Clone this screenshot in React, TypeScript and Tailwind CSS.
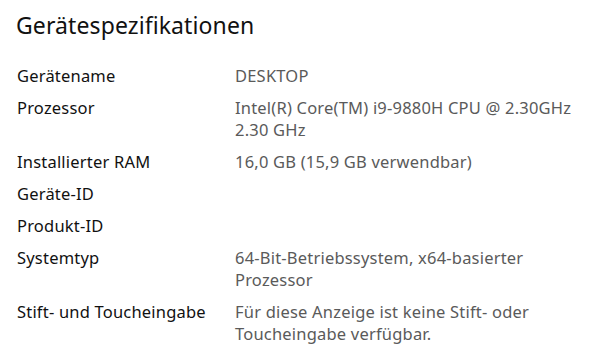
import React from "react";

const rows: { label: string; value: string[] }[] = [
  { label: "Gerätename", value: ["DESKTOP"] },
  { label: "Prozessor", value: ["Intel(R) Core(TM) i9-9880H CPU @ 2.30GHz", "2.30 GHz"] },
  { label: "Installierter RAM", value: ["16,0 GB (15,9 GB verwendbar)"] },
  { label: "Geräte-ID", value: [] },
  { label: "Produkt-ID", value: [] },
  { label: "Systemtyp", value: ["64-Bit-Betriebssystem, x64-basierter", "Prozessor"] },
  { label: "Stift- und Toucheingabe", value: ["Für diese Anzeige ist keine Stift- oder", "Toucheingabe verfügbar."] },
];

export default function App() {
  return (
    <div
      className="w-[600px] h-[358px] bg-white overflow-hidden"
      style={{ fontFamily: '"Noto Sans", "Open Sans", sans-serif' }}
    >
      <h1 className="pl-[16px] pt-[9px] text-[23px] leading-[32px] tracking-[0.1px] text-[#111]">Gerätespezifikationen</h1>
      <div className="mt-[24px] flex flex-col gap-[10px] pl-[17px]">
        {rows.map((r) => (
          <div key={r.label} className="flex text-[16.5px] leading-[22px] tracking-[0.2px]">
            <div className="w-[218px] shrink-0 text-[#111]">{r.label}</div>
            <div className="text-[#5a5a5a] min-h-[22px]">
              {r.value.map((v) => (
                <div key={v}>{v}</div>
              ))}
            </div>
          </div>
        ))}
      </div>
    </div>
  );
}
